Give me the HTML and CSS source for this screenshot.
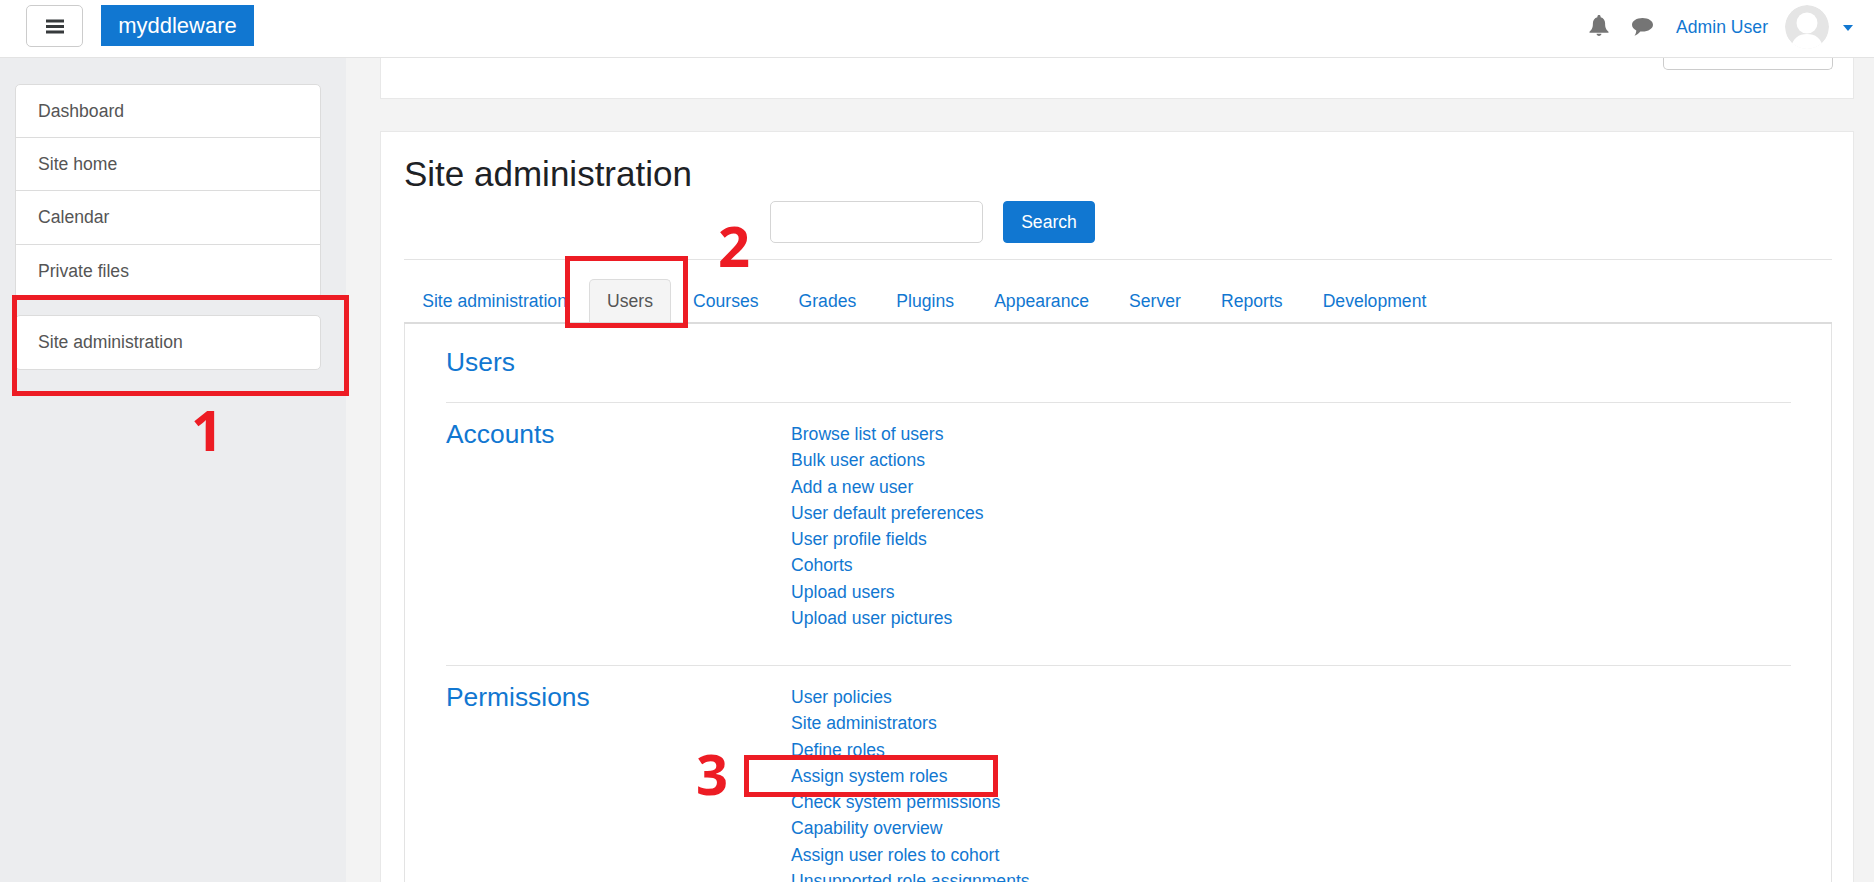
FILE: index.html
```html
<!DOCTYPE html>
<html lang="en">
<head>
<meta charset="utf-8">
<title>Site administration</title>
<link rel="stylesheet" href="styles.css">
</head>
<body>
<header class="navbar">
  <button class="menu-btn" aria-label="Menu">
    <svg width="18" height="15" viewBox="0 0 18 15"><path d="M0 0.5h18v3H0zM0 6h18v3H0zM0 11.500h18v3H0z" fill="#373a3c"/></svg>
  </button>
  <a class="brand">myddleware</a>
  <div class="nav-right">
    <svg class="bell" width="20" height="21" viewBox="0 0 20 21"><path d="M10 0c1 0 1.600.7 1.600 1.700v.5c2.900.7 4.500 3 4.500 6 0 4 .6 6 3.400 8.500v1H.5v-1C3.300 14.200 3.900 12.200 3.900 8.200c0-3 1.600-5.300 4.500-6v-.5C8.400.7 9 0 10 0zM7.600 18.800h4.800c0 1.300-1 2.200-2.400 2.200s-2.400-.9-2.400-2.200z" fill="#757575"/></svg>
    <svg class="chat" width="21" height="18" viewBox="0 0 21 18"><path d="M10.500 0C16.300 0 21 2.900 21 6.800c0 3.800-4.700 6.800-10.500 6.800-.8 0-1.500 0-2.200-.2C7 15.300 4.800 17 2.500 17.700c.9-1.300 1.700-3 1.800-5.200C1.700 11.200 0 9.200 0 6.800 0 2.900 4.700 0 10.500 0z" fill="#757575"/></svg>
    <a class="user-name">Admin User</a>
    <span class="avatar">
      <svg width="44" height="44" viewBox="0 0 44 44"><circle cx="22" cy="22" r="22" fill="#e5e5e5"/><circle cx="22" cy="18" r="10.500" fill="#fff"/><path d="M6 44c1-11 8-15 16-15s15 4 16 15z" fill="#fff"/></svg>
    </span>
    <span class="caret"></span>
  </div>
</header>
<div class="layout">
  <aside class="sidebar">
    <ul class="side-list">
      <li class="side-item">Dashboard</li>
      <li class="side-item">Site home</li>
      <li class="side-item">Calendar</li>
      <li class="side-item">Private files</li>
    </ul>
    <ul class="side-list side-list-second">
      <li class="side-item">Site administration</li>
    </ul>
  </aside>
  <main class="main">
    <section class="card card-top"><span class="cut-btn"></span></section>
    <section class="card card-main">
      <h1 class="title">Site administration</h1>
      <form class="search">
        <input class="search-input" type="text" aria-label="Search">
        <button class="search-btn" type="button">Search</button>
      </form>
      <nav class="tabs">
        <a class="tab">Site administration</a>
        <a class="tab tab-active">Users</a>
        <a class="tab">Courses</a>
        <a class="tab">Grades</a>
        <a class="tab">Plugins</a>
        <a class="tab">Appearance</a>
        <a class="tab">Server</a>
        <a class="tab">Reports</a>
        <a class="tab">Development</a>
      </nav>
      <div class="pane">
        <h2 class="pane-title">Users</h2>
        <div class="group">
          <h3 class="group-title">Accounts</h3>
          <ul class="links">
            <li>Browse list of users</li>
            <li>Bulk user actions</li>
            <li>Add a new user</li>
            <li>User default preferences</li>
            <li>User profile fields</li>
            <li>Cohorts</li>
            <li>Upload users</li>
            <li>Upload user pictures</li>
          </ul>
        </div>
        <div class="group">
          <h3 class="group-title">Permissions</h3>
          <ul class="links">
            <li>User policies</li>
            <li>Site administrators</li>
            <li>Define roles</li>
            <li>Assign system roles</li>
            <li>Check system permissions</li>
            <li>Capability overview</li>
            <li>Assign user roles to cohort</li>
            <li>Unsupported role assignments</li>
          </ul>
        </div>
      </div>
    </section>
  </main>
</div>
<div class="mark mark-1"></div>
<div class="mark mark-2"></div>
<div class="mark mark-3"></div>
<span class="num num-1">1</span>
<span class="num num-2">2</span>
<span class="num num-3">3</span>
</body>
</html>
```
FILE: styles.css
```css
* { box-sizing: border-box; }
html, body { margin: 0; height: 882px; overflow: hidden; }
body { font-family: "Liberation Sans", Arial, sans-serif; font-size: 17.600px; background: #f3f3f3; color: #373a3c; position: relative; }
ul { list-style: none; margin: 0; padding: 0; }
h1, h2, h3 { margin: 0; font-weight: 400; }

.navbar { height: 58px; background: #fff; border-bottom: 1px solid #e3e3e3; display: flex; align-items: flex-start; padding: 5px 21px 0 26px; }
.menu-btn { width: 57px; height: 42px; background: #fff; border: 1px solid #ccc; border-radius: 5px; display: flex; align-items: center; justify-content: center; padding: 0; }
.brand { margin-left: 18px; width: 153px; height: 41px; background: #1177d1; color: #fff; font-size: 22px; display: flex; align-items: center; justify-content: center; }
.nav-right { margin-left: auto; display: flex; align-items: center; height: 44px; }
.bell { margin-top: -4px; }
.chat { margin-left: 23px; }
.user-name { margin-left: 23px; color: #1177d1; }
.avatar { margin-left: 17px; width: 44px; height: 44px; display: block; border-radius: 50%; overflow: hidden; }
.avatar svg { display: block; }
.caret { margin-left: 14px; border: 5px solid transparent; border-top: 6px solid #1177d1; border-bottom: 0; margin-top: 1px; }

.layout { display: flex; height: 824px; }
.sidebar { width: 346px; flex: none; background: #ecedef; padding: 26px 0 0 15px; }
.side-list { width: 306px; background: #fff; border: 1px solid #dcdcdc; border-radius: 5px; }
.side-list-second { margin-top: 16px; }
.side-item { height: 53.200px; padding-left: 22px; display: flex; align-items: center; color: #555; border-bottom: 1px solid #dcdcdc; }
.side-item:last-child { border-bottom: 0; }

.main { flex: 1; padding: 0 20px 0 34px; }
.card { background: #fff; border: 1px solid #e8e8e8; }
.card-top { height: 41px; border-top: 0; padding-right: 20px; display: flex; justify-content: flex-end; align-items: flex-start; }
.cut-btn { width: 170px; height: 12px; border: 1px solid #ccc; border-top: 0; border-radius: 0 0 5px 5px; }
.card-main { margin-top: 32px; padding: 22px 21px 0 23px; height: 760px; overflow: hidden; }
.title { font-size: 35px; line-height: 39px; color: #1d2125; height: 41px; }
.search { display: flex; margin-top: 6px; height: 59px; border-bottom: 1px solid #e3e3e3; padding-left: 366px; gap: 20px; align-items: flex-start; }
.search-input { width: 213px; height: 42px; border: 1px solid #d5d5d5; border-radius: 5px; background: #fff; }
.search-btn { width: 92px; height: 42px; background: #1177d1; color: #fff; border: 1px solid #1177d1; border-radius: 4px; font: inherit; padding: 0; }
.tabs { display: flex; margin-top: 18px; height: 46px; border-bottom: 2px solid #dcdcdc; gap: 3.700px; }
.tab { padding: 0 17.200px; height: 46px; display: flex; align-items: center; color: #1177d1; border: 1px solid transparent; border-bottom: 0; border-radius: 5px 5px 0 0; }
.tab-active { background: #f4f4f4; border-color: #dcdcdc; color: #555; height: 43px; margin-top: 1px; }
.pane { border-left: 1px solid #e3e3e3; border-right: 1px solid #e3e3e3; padding: 21px 40px 0 41px; }
.pane-title { font-size: 26.400px; line-height: 34px; color: #1177d1; height: 57px; }
.group { display: flex; border-top: 1px solid #e3e3e3; padding-top: 14px; height: 263px; }
.group-title { width: 345px; flex: none; font-size: 26.400px; line-height: 34px; color: #1177d1; }
.links { color: #1177d1; line-height: 26.300px; margin-top: 4px; }

.mark { position: absolute; border: 5px solid #ed1c24; }
.mark-1 { left: 12px; top: 295px; width: 337px; height: 101px; }
.mark-2 { left: 565px; top: 256px; width: 123px; height: 72px; }
.mark-3 { left: 744px; top: 755px; width: 254px; height: 42px; }
.num { position: absolute; font-family: "Open Sans", sans-serif; font-weight: 700; font-size: 56px; line-height: 60px; color: #ed1c24; }
.num-1 { left: 191px; top: 399px; }
.num-2 { left: 718px; top: 215px; }
.num-3 { left: 696px; top: 743px; }
```
